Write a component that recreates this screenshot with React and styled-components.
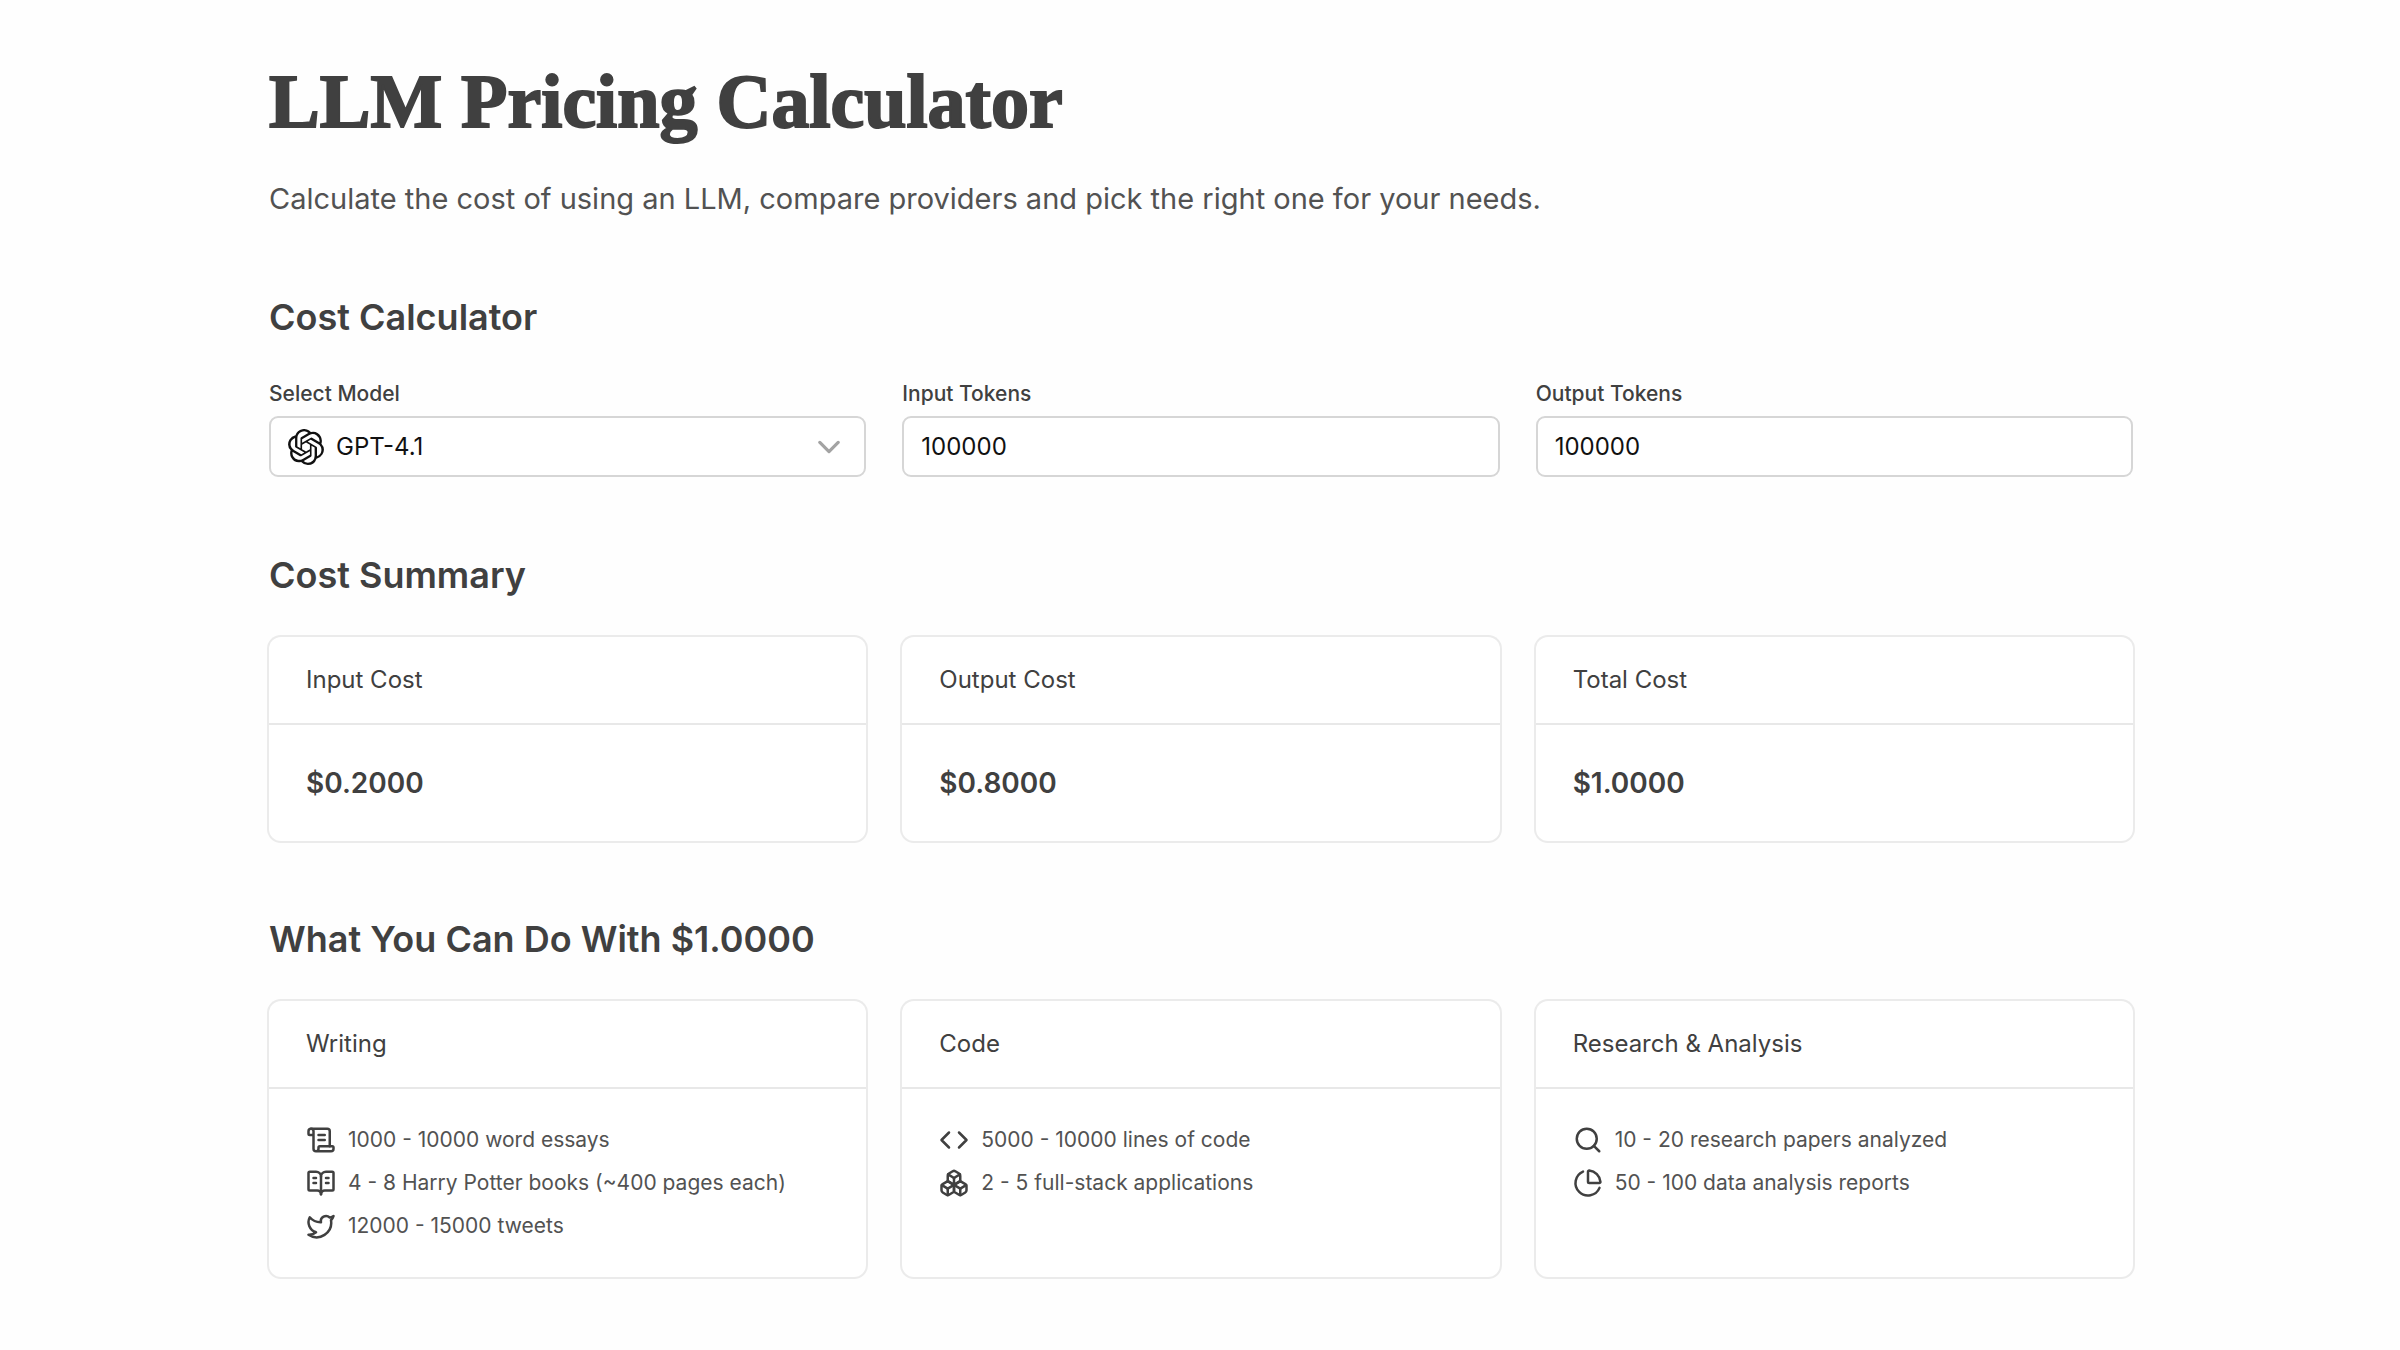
import React, { useState } from "react";
import styled, { createGlobalStyle } from "styled-components";
import { SiOpenai } from "react-icons/si";
import { ScrollText, BookOpenText, Twitter, Code, Boxes, Search, ChartPie } from "lucide-react";

const GlobalStyle = createGlobalStyle`
  *, *::before, *::after { box-sizing: border-box; }
  body {
    margin: 0;
    background: #fefefe;
    color: #404040;
    font-family: Inter, "Liberation Sans", sans-serif;
  }
  h1, h2, h3, p, ul { margin: 0; padding: 0; font-weight: 400; }
`;

const Page = styled.main`
  display: flex;
  flex-direction: column;
  gap: 73px;
  padding: 57px 267px 72px 269px;
`;

const Intro = styled.header`
  display: flex;
  flex-direction: column;
  gap: 34px;
`;

const Title = styled.h1`
  font-family: "Liberation Serif", serif;
  font-size: 76px;
  font-weight: 700;
  line-height: 88px;
  -webkit-text-stroke: 2px #404040;
`;

const Lead = styled.p`
  font-size: 29px;
  line-height: 40px;
  color: #525252;
`;

const Section = styled.section`
  display: flex;
  flex-direction: column;
`;

const SectionTitle = styled.h2`
  font-size: 36px;
  font-weight: 600;
  line-height: 50px;
  margin-bottom: 37px;
`;

const Columns = styled.div`
  display: grid;
  grid-template-columns: repeat(3, minmax(0, 1fr));
  gap: 36px;
`;

const Field = styled.div`
  display: flex;
  flex-direction: column;
  gap: 7px;
`;

const Label = styled.label`
  font-size: 21px;
  font-weight: 500;
  line-height: 30px;
`;

const Control = styled.div`
  display: flex;
  align-items: center;
  gap: 12px;
  height: 61px;
  padding: 0 17px;
  border: 2px solid #d6d6d6;
  border-radius: 9px;
  color: #111;
  background: #fff;
`;

const TextInput = styled.input`
  flex: 1;
  min-width: 0;
  padding: 0;
  border: 0;
  outline: 0;
  background: transparent;
  color: inherit;
  font: inherit;
  font-size: 24px;
`;

const ModelSelect = styled(TextInput).attrs({ as: "select" })`
  appearance: none;
`;

const Chevron = styled.svg`
  width: 22px;
  height: 22px;
  margin-right: 7px;
  color: #a3a3a3;
  pointer-events: none;
`;

const Card = styled.article`
  border-radius: 12px;
  background: #fff;
  box-shadow: 0 0 0 2px #ebebeb;
`;

const CardTitle = styled.h3`
  padding: 25px 37px;
  border-bottom: 2px solid #e8e8e8;
  font-size: 24px;
  line-height: 36px;
`;

const CardBody = styled.div`
  padding: 36px 37px;
`;

const Amount = styled.p`
  font-size: 28px;
  font-weight: 600;
  line-height: 44px;
`;

const UseList = styled.ul`
  display: flex;
  flex-direction: column;
  gap: 13px;
  list-style: none;
`;

const UseItem = styled.li`
  display: flex;
  align-items: center;
  gap: 12px;
  font-size: 21px;
  line-height: 30px;
  color: #525252;

  svg {
    width: 30px;
    height: 30px;
    color: #404040;
  }
`;

const uses = [
  {
    title: "Writing",
    items: [
      [ScrollText, "1000 - 10000 word essays"],
      [BookOpenText, "4 - 8 Harry Potter books (~400 pages each)"],
      [Twitter, "12000 - 15000 tweets"],
    ],
  },
  {
    title: "Code",
    items: [
      [Code, "5000 - 10000 lines of code"],
      [Boxes, "2 - 5 full-stack applications"],
    ],
  },
  {
    title: "Research & Analysis",
    items: [
      [Search, "10 - 20 research papers analyzed"],
      [ChartPie, "50 - 100 data analysis reports"],
    ],
  },
];

const INPUT_RATE = 2;
const OUTPUT_RATE = 8;
const cost = (tokens, rate) => (Number(tokens) * rate) / 1000000;
const money = (value) => `$${value.toFixed(4)}`;

export default function App() {
  const [input, setInput] = useState("100000");
  const [output, setOutput] = useState("100000");
  const inputCost = cost(input, INPUT_RATE);
  const outputCost = cost(output, OUTPUT_RATE);
  const total = inputCost + outputCost;

  return (
    <>
      <GlobalStyle />
      <Page>
        <Intro>
          <Title>LLM Pricing Calculator</Title>
          <Lead>Calculate the cost of using an LLM, compare providers and pick the right one for your needs.</Lead>
        </Intro>

        <Section>
          <SectionTitle>Cost Calculator</SectionTitle>
          <Columns>
            <Field>
              <Label htmlFor="model">Select Model</Label>
              <Control>
                <SiOpenai size={36} aria-hidden="true" />
                <ModelSelect id="model" defaultValue="gpt-4.1">
                  <option value="gpt-4.1">GPT-4.1</option>
                </ModelSelect>
                <Chevron viewBox="0 0 24 24" fill="none" stroke="currentColor" strokeWidth="3.5" strokeLinecap="round" strokeLinejoin="round" aria-hidden="true">
                  <path d="M2 7l10 10L22 7" />
                </Chevron>
              </Control>
            </Field>
            <Field>
              <Label htmlFor="input-tokens">Input Tokens</Label>
              <Control>
                <TextInput id="input-tokens" inputMode="numeric" value={input} onChange={(e) => setInput(e.target.value)} />
              </Control>
            </Field>
            <Field>
              <Label htmlFor="output-tokens">Output Tokens</Label>
              <Control>
                <TextInput id="output-tokens" inputMode="numeric" value={output} onChange={(e) => setOutput(e.target.value)} />
              </Control>
            </Field>
          </Columns>
        </Section>

        <Section>
          <SectionTitle>Cost Summary</SectionTitle>
          <Columns>
            {[["Input Cost", inputCost], ["Output Cost", outputCost], ["Total Cost", total]].map(([name, value]) => (
              <Card key={name}>
                <CardTitle>{name}</CardTitle>
                <CardBody>
                  <Amount>{money(value)}</Amount>
                </CardBody>
              </Card>
            ))}
          </Columns>
        </Section>

        <Section>
          <SectionTitle>What You Can Do With {money(total)}</SectionTitle>
          <Columns>
            {uses.map(({ title, items }) => (
              <Card key={title}>
                <CardTitle>{title}</CardTitle>
                <CardBody>
                  <UseList>
                    {items.map(([Icon, text]) => (
                      <UseItem key={text}>
                        <Icon aria-hidden="true" />
                        {text}
                      </UseItem>
                    ))}
                  </UseList>
                </CardBody>
              </Card>
            ))}
          </Columns>
        </Section>
      </Page>
    </>
  );
}
